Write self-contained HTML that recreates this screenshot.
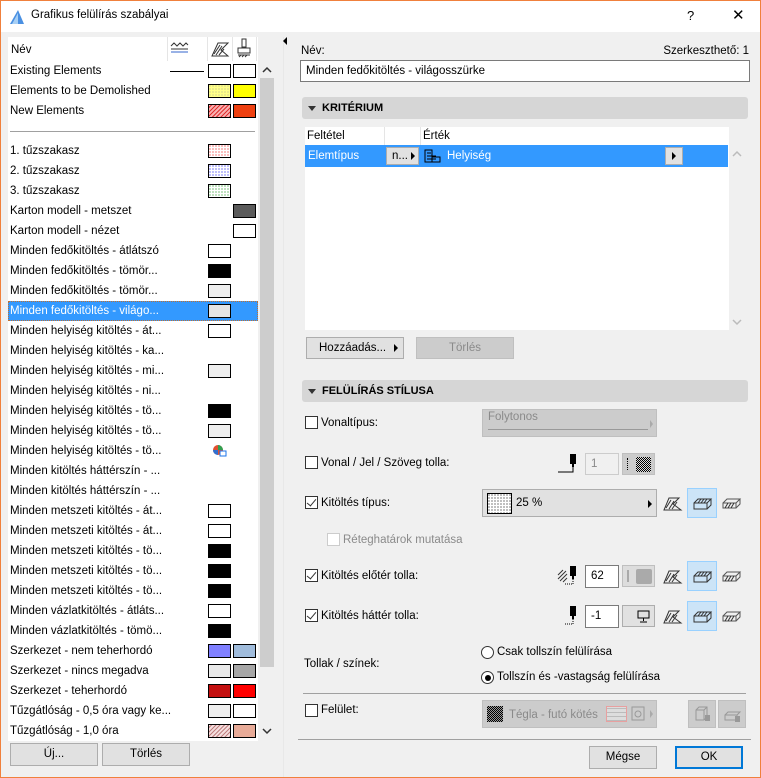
<!DOCTYPE html>
<html><head><meta charset="utf-8"><style>
*{box-sizing:border-box;margin:0;padding:0}
body{width:761px;height:778px;background:#f0f0f0;font-family:"Liberation Sans",sans-serif;font-size:11.5px;color:#000;position:relative;overflow:hidden}
.a{position:absolute}
.win{position:absolute;left:0;top:0;width:761px;height:778px;border:1px solid #f0803c;pointer-events:none}
.row{position:absolute;left:8px;width:250px;height:20px;line-height:21px;padding-left:2px;white-space:nowrap}
.sw{position:absolute;width:23px;height:14px;border:1px solid #000;top:3px}
.s1{left:200px}.s2{left:225px}
.btn{position:absolute;background:#e1e1e1;border:1px solid #adadad;text-align:center}
.hdr{position:absolute;left:302px;width:446px;height:22px;background:#d6d6d6;border-radius:3px;font-weight:bold;line-height:22px;padding-left:20px;font-size:11px}
.hdr:before{content:"";position:absolute;left:6px;top:9px;border-left:4px solid transparent;border-right:4px solid transparent;border-top:5px solid #333}
.cb{position:absolute;width:13px;height:13px;border:1px solid #333;background:#fff}
.cb.on:after{content:"";position:absolute;left:3px;top:0px;width:4px;height:8px;border:solid #333;border-width:0 1.5px 1.5px 0;transform:rotate(40deg)}
.lbl{position:absolute;white-space:nowrap}
.dd{position:absolute;background:#e1e1e1;border:1px solid #adadad}
.inp{position:absolute;background:#fff;border:1px solid #7a7a7a;padding-left:5px;line-height:20px}
.ico{position:absolute;width:30px;height:30px}
.ico.sel{background:#cce4f7;border:1px solid #99d1ff}
.dots{background-image:radial-gradient(circle at 1px 1px,#000 0.6px,transparent 0.7px);background-size:3px 3px}
</style></head><body>
<div class="a" style="left:0;top:0;width:761px;height:32px;background:#fff"></div>
<svg class="a" style="left:9px;top:9px" width="16" height="16"><path d="M1 15 L9 1 L15 15 Z" fill="#4a90e2"/><path d="M3 15 L9 4 L9 15Z" fill="#a8d0f5"/></svg>
<div class="lbl" style="left:31px;top:9px;font-size:11.5px">Grafikus felülírás szabályai</div>
<div class="lbl" style="left:687px;top:8px;font-size:13px">?</div>
<div class="lbl" style="left:732px;top:6px;font-size:15px">✕</div>

<div class="a" style="left:8px;top:37px;width:250px;height:704px;background:#fff"></div>
<div class="lbl" style="left:11px;top:44px">Név</div>
<div class="a" style="left:167px;top:37px;width:1px;height:24px;background:#e5e5e5"></div>
<div class="a" style="left:207px;top:37px;width:1px;height:24px;background:#e5e5e5"></div>
<div class="a" style="left:232px;top:37px;width:1px;height:24px;background:#e5e5e5"></div>
<div class="a" style="left:256px;top:37px;width:1px;height:24px;background:#e5e5e5"></div>
<svg class="a" style="left:170px;top:41px" width="20" height="14"><path d="M1 5 L4 2 L7 5 L10 2 L13 5 L16 2 L18 4" stroke="#333" fill="none"/><path d="M1 8H18" stroke="#333"/><path d="M1 11H18" stroke="#3366cc"/></svg>
<svg class="a" style="left:210px;top:40px" width="20" height="18"><path d="M2 16 L8 3 H18 L11 10 L18 16 Z" fill="none" stroke="#333"/><path d="M4 14L10 5M6 15L12 6M9 15L14 9" stroke="#333"/></svg>
<svg class="a" style="left:236px;top:38px" width="16" height="20"><rect x="6" y="1" width="4" height="8" fill="none" stroke="#333"/><path d="M2 10H14V15H2Z" fill="none" stroke="#333"/><path d="M2 17H14M3 19L5 17M6 19L8 17M9 19L11 17" stroke="#333"/></svg>

<div class="row" style="top:61px">Existing Elements<div class="a" style="left:162px;top:10px;width:34px;height:1px;background:#000"></div><div class="sw s1" style="background:#fff"></div><div class="sw s2" style="background:#fff"></div></div>
<div class="row" style="top:81px">Elements to be Demolished<div class="sw s1" style="background-color:#ffff88;background-image:radial-gradient(circle at 1px 1px,#aa9 0.6px,transparent 0.7px);background-size:3px 3px"></div><div class="sw s2" style="background:#ffff00"></div></div>
<div class="row" style="top:101px">New Elements<div class="sw s1" style="background:repeating-linear-gradient(-45deg,#e03030 0 1px,#f8b0b0 1px 3px)"></div><div class="sw s2" style="background:#ee4010"></div></div>
<div class="a" style="left:10px;top:131px;width:245px;height:1px;background:#a0a0a0"></div>

<div class="row" style="top:141px">1. tűzszakasz<div class="sw s1" style="background:#fff;background-image:radial-gradient(circle at 1px 1px,#e00 0.6px,transparent 0.7px);background-size:3px 3px"></div></div>
<div class="row" style="top:161px">2. tűzszakasz<div class="sw s1" style="background:#fff;background-image:radial-gradient(circle at 1px 1px,#00e 0.6px,transparent 0.7px);background-size:3px 3px"></div></div>
<div class="row" style="top:181px">3. tűzszakasz<div class="sw s1" style="background:#fff;background-image:radial-gradient(circle at 1px 1px,#080 0.6px,transparent 0.7px);background-size:3px 3px"></div></div>
<div class="row" style="top:201px">Karton modell - metszet<div class="sw s2" style="background:#5a5a5a"></div></div>
<div class="row" style="top:221px">Karton modell - nézet<div class="sw s2" style="background:#fff"></div></div>
<div class="row" style="top:241px">Minden fedőkitöltés - átlátszó<div class="sw s1" style="background:#fff"></div></div>
<div class="row" style="top:261px">Minden fedőkitöltés - tömör...<div class="sw s1" style="background:#000"></div></div>
<div class="row" style="top:281px">Minden fedőkitöltés - tömör...<div class="sw s1" style="background:#eee"></div></div>
<div class="row" style="top:301px;background:#3399ff;color:#fff;outline:1px dotted #c07030;outline-offset:-1px">Minden fedőkitöltés - világo...<div class="sw s1" style="background:#e4e4e4"></div></div>
<div class="row" style="top:321px">Minden helyiség kitöltés - át...<div class="sw s1" style="background:#fff"></div></div>
<div class="row" style="top:341px">Minden helyiség kitöltés - ka...</div>
<div class="row" style="top:361px">Minden helyiség kitöltés - mi...<div class="sw s1" style="background:#eee"></div></div>
<div class="row" style="top:381px">Minden helyiség kitöltés - ni...</div>
<div class="row" style="top:401px">Minden helyiség kitöltés - tö...<div class="sw s1" style="background:#000"></div></div>
<div class="row" style="top:421px">Minden helyiség kitöltés - tö...<div class="sw s1" style="background:#eee"></div></div>
<div class="row" style="top:441px">Minden helyiség kitöltés - tö...<svg class="a" style="left:204px;top:3px" width="16" height="14"><circle cx="6" cy="6" r="5" fill="#e05030"/><path d="M6 6V1A5 5 0 0 1 11 6Z" fill="#30a050"/><path d="M6 6H1A5 5 0 0 0 6 11Z" fill="#3070d0"/><rect x="8" y="7" width="6" height="5" fill="#fff" stroke="#1a73e8"/></svg></div>
<div class="row" style="top:461px">Minden kitöltés háttérszín - ...</div>
<div class="row" style="top:481px">Minden kitöltés háttérszín - ...</div>
<div class="row" style="top:501px">Minden metszeti kitöltés - át...<div class="sw s1" style="background:#fff"></div></div>
<div class="row" style="top:521px">Minden metszeti kitöltés - át...<div class="sw s1" style="background:#fff"></div></div>
<div class="row" style="top:541px">Minden metszeti kitöltés - tö...<div class="sw s1" style="background:#000"></div></div>
<div class="row" style="top:561px">Minden metszeti kitöltés - tö...<div class="sw s1" style="background:#000"></div></div>
<div class="row" style="top:581px">Minden metszeti kitöltés - tö...<div class="sw s1" style="background:#000"></div></div>
<div class="row" style="top:601px">Minden vázlatkitöltés - átláts...<div class="sw s1" style="background:#fff"></div></div>
<div class="row" style="top:621px">Minden vázlatkitöltés - tömö...<div class="sw s1" style="background:#000"></div></div>
<div class="row" style="top:641px">Szerkezet - nem teherhordó<div class="sw s1" style="background:#8080ff"></div><div class="sw s2" style="background:#a0bcdc"></div></div>
<div class="row" style="top:661px">Szerkezet - nincs megadva<div class="sw s1" style="background:#e8e8e8"></div><div class="sw s2" style="background:#a6a6a6"></div></div>
<div class="row" style="top:681px">Szerkezet - teherhordó<div class="sw s1" style="background:#c41010"></div><div class="sw s2" style="background:#ff0000"></div></div>
<div class="row" style="top:701px">Tűzgátlóság - 0,5 óra vagy ke...<div class="sw s1" style="background:#eee"></div><div class="sw s2" style="background:#fff"></div></div>
<div class="row" style="top:721px">Tűzgátlóság - 1,0 óra<div class="sw s1" style="background:repeating-linear-gradient(-45deg,#c08080 0 1px,#f4dede 1px 3px)"></div><div class="sw s2" style="background:#e8ab98"></div></div>

<div class="a" style="left:258px;top:61px;width:17px;height:680px;background:#f0f0f0"></div>
<div class="a" style="left:260px;top:78px;width:14px;height:589px;background:#cdcdcd"></div>
<svg class="a" style="left:262px;top:66px" width="10" height="8"><path d="M1 6L5 2L9 6" stroke="#333" stroke-width="1.5" fill="none"/></svg>
<svg class="a" style="left:262px;top:727px" width="10" height="8"><path d="M1 2L5 6L9 2" stroke="#333" stroke-width="1.5" fill="none"/></svg>

<div class="btn" style="left:10px;top:743px;width:88px;height:23px;line-height:21px">Új...</div>
<div class="btn" style="left:102px;top:743px;width:88px;height:23px;line-height:21px">Törlés</div>

<div class="a" style="left:283px;top:37px;width:1px;height:741px;background:#e8e8e8"></div>
<svg class="a" style="left:282px;top:37px" width="6" height="8"><path d="M5 0L1 4L5 8Z" fill="#000"/></svg>

<div class="lbl" style="left:301px;top:45px">Név:</div>
<div class="lbl" style="right:12px;top:45px">Szerkeszthető: 1</div>
<div class="inp" style="left:300px;top:60px;width:450px;height:22px">Minden fedőkitöltés - világosszürke</div>

<div class="hdr" style="top:97px">KRITÉRIUM</div>
<div class="a" style="left:305px;top:127px;width:424px;height:203px;background:#fff"></div>
<div class="lbl" style="left:307px;top:130px">Feltétel</div>
<div class="a" style="left:384px;top:127px;width:1px;height:18px;background:#e5e5e5"></div>
<div class="a" style="left:420px;top:127px;width:1px;height:18px;background:#e5e5e5"></div>
<div class="lbl" style="left:423px;top:130px">Érték</div>
<div class="a" style="left:305px;top:145px;width:423px;height:22px;background:#3399ff"></div>
<div class="lbl" style="left:308px;top:150px;color:#fff">Elemtípus</div>
<div class="btn" style="left:386px;top:147px;width:33px;height:18px;line-height:16px;text-align:left;padding-left:5px">n...<span style="position:absolute;right:3px;top:4px;border-left:4px solid #000;border-top:4px solid transparent;border-bottom:4px solid transparent"></span></div>
<svg class="a" style="left:424px;top:148px" width="18" height="16"><path d="M1 2H8V14H1ZM8 9H16V14H8" fill="none" stroke="#000"/><path d="M3 5H7M3 8H12M3 11H12" stroke="#000"/></svg>
<div class="lbl" style="left:447px;top:150px;color:#fff">Helyiség</div>
<div class="btn" style="left:665px;top:147px;width:18px;height:18px"><span style="position:absolute;left:6px;top:4px;border-left:4px solid #000;border-top:4px solid transparent;border-bottom:4px solid transparent"></span></div>
<svg class="a" style="left:732px;top:150px" width="10" height="8"><path d="M1 6L5 2L9 6" stroke="#bbb" stroke-width="1.5" fill="none"/></svg>
<svg class="a" style="left:732px;top:318px" width="10" height="8"><path d="M1 2L5 6L9 2" stroke="#bbb" stroke-width="1.5" fill="none"/></svg>

<div class="btn" style="left:306px;top:337px;width:98px;height:22px;line-height:20px;text-align:left;padding-left:12px">Hozzáadás...<span style="position:absolute;right:5px;top:6px;border-left:4px solid #000;border-top:4px solid transparent;border-bottom:4px solid transparent"></span></div>
<div class="btn" style="left:416px;top:337px;width:98px;height:22px;line-height:20px;background:#ccc;border-color:#bfbfbf;color:#8a8a8a">Törlés</div>

<div class="hdr" style="top:380px">FELÜLÍRÁS STÍLUSA</div>

<div class="cb" style="left:305px;top:416px"></div>
<div class="lbl" style="left:321px;top:417px">Vonaltípus:</div>
<div class="dd" style="left:482px;top:409px;width:175px;height:28px;background:#ccc;border-color:#bfbfbf;color:#8a8a8a;padding:1px 5px">Folytonos<div class="a" style="left:5px;top:19px;width:160px;height:1px;background:#999"></div><span style="position:absolute;right:3px;top:10px;border-left:3px solid #aaa;border-top:4px solid transparent;border-bottom:4px solid transparent"></span></div>

<div class="cb" style="left:305px;top:456px"></div>
<div class="lbl" style="left:321px;top:457px">Vonal / Jel / Szöveg tolla:</div>
<svg class="a" style="left:557px;top:453px" width="24" height="20"><path d="M1 19H16V13" stroke="#000" fill="none"/><rect x="13" y="1" width="6" height="10" fill="#000"/><rect x="15" y="10" width="2" height="4" fill="#000"/></svg>
<div class="inp" style="left:585px;top:453px;width:34px;height:22px;border-color:#ccc;background:#f0f0f0;color:#888">1</div>
<div class="btn" style="left:622px;top:453px;width:33px;height:22px;background:#ccc;border-color:#bfbfbf"><div class="a" style="left:4px;top:4px;width:1px;height:12px;border-left:1px dotted #000"></div><div class="a" style="left:13px;top:3px;width:15px;height:15px;background:repeating-conic-gradient(#000 0 25%,#ddd 0 50%) 0 0/2px 2px"></div></div>

<div class="cb on" style="left:305px;top:496px"></div>
<div class="lbl" style="left:321px;top:497px">Kitöltés típus:</div>
<div class="dd" style="left:482px;top:489px;width:175px;height:28px"><div class="a dots" style="left:4px;top:3px;width:25px;height:21px;border:1px solid #000;background-color:#fff"></div><div class="lbl" style="left:33px;top:7px">25 %</div><span style="position:absolute;right:4px;top:10px;border-left:4px solid #000;border-top:4px solid transparent;border-bottom:4px solid transparent"></span></div>

<div class="cb" style="left:327px;top:533px;border-color:#ccc"></div>
<div class="lbl" style="left:343px;top:534px;color:#8a8a8a">Réteghatárok mutatása</div>

<div class="cb on" style="left:305px;top:569px"></div>
<div class="lbl" style="left:321px;top:570px">Kitöltés előtér tolla:</div>
<svg class="a" style="left:557px;top:565px" width="24" height="20"><path d="M1 10L6 5M1 14L9 6M3 16L10 9M6 17L10 13" stroke="#333"/><path d="M8 19H16V13" stroke="#000" fill="none" stroke-dasharray="1 1"/><rect x="13" y="1" width="6" height="10" fill="#000"/><rect x="15" y="10" width="2" height="4" fill="#000"/></svg>
<div class="inp" style="left:585px;top:565px;width:34px;height:23px">62</div>
<div class="btn" style="left:622px;top:565px;width:33px;height:22px;background:#ddd;border-color:#bfbfbf"><div class="a" style="left:4px;top:4px;width:2px;height:12px;background:#aaa"></div><div class="a" style="left:13px;top:3px;width:16px;height:15px;background:#aaa;border-radius:2px"></div></div>

<div class="cb on" style="left:305px;top:609px"></div>
<div class="lbl" style="left:321px;top:610px">Kitöltés háttér tolla:</div>
<svg class="a" style="left:557px;top:605px" width="24" height="20"><path d="M8 19H16V13" stroke="#000" fill="none" stroke-dasharray="1 1"/><rect x="13" y="1" width="6" height="10" fill="#000"/><rect x="15" y="10" width="2" height="4" fill="#000"/></svg>
<div class="inp" style="left:585px;top:605px;width:34px;height:23px">-1</div>
<div class="btn" style="left:622px;top:605px;width:33px;height:22px"><svg class="a" style="left:14px;top:4px" width="14" height="13"><rect x="1" y="1" width="11" height="7" fill="none" stroke="#000"/><path d="M6.5 8V11M3 12H10" stroke="#000"/></svg></div>

<svg class="a" style="left:663px;top:496px" width="20" height="16"><path d="M1 14L6 2H16L10 8L18 14Z" fill="none" stroke="#333"/><path d="M3 12L8 4M6 13L11 5M9 13L14 6" stroke="#333"/></svg>
<div class="ico sel" style="left:687px;top:488px"><svg style="position:absolute;left:5px;top:8px" width="20" height="14"><path d="M1 6H14V12H1ZM1 6L5 2H18L14 6M18 2V8L14 12" fill="none" stroke="#333"/><path d="M5 6L8 2M8 6L11 2M11 6L14 2" stroke="#333"/></svg></div>
<svg class="a" style="left:722px;top:496px" width="20" height="14"><path d="M1 7H14V12H1ZM1 7L5 3H18L14 7M18 3V8L14 12" fill="none" stroke="#555"/><path d="M3 12L6 7M6 12L9 7M9 12L12 7" stroke="#333"/></svg>

<svg class="a" style="left:663px;top:569px" width="20" height="16"><path d="M1 14L6 2H16L10 8L18 14Z" fill="none" stroke="#333"/><path d="M3 12L8 4M6 13L11 5M9 13L14 6" stroke="#333"/></svg>
<div class="ico sel" style="left:687px;top:561px"><svg style="position:absolute;left:5px;top:8px" width="20" height="14"><path d="M1 6H14V12H1ZM1 6L5 2H18L14 6M18 2V8L14 12" fill="none" stroke="#333"/><path d="M5 6L8 2M8 6L11 2M11 6L14 2" stroke="#333"/></svg></div>
<svg class="a" style="left:722px;top:569px" width="20" height="14"><path d="M1 7H14V12H1ZM1 7L5 3H18L14 7M18 3V8L14 12" fill="none" stroke="#555"/><path d="M3 12L6 7M6 12L9 7M9 12L12 7" stroke="#333"/></svg>

<svg class="a" style="left:663px;top:609px" width="20" height="16"><path d="M1 14L6 2H16L10 8L18 14Z" fill="none" stroke="#333"/><path d="M3 12L8 4M6 13L11 5M9 13L14 6" stroke="#333"/></svg>
<div class="ico sel" style="left:687px;top:601px"><svg style="position:absolute;left:5px;top:8px" width="20" height="14"><path d="M1 6H14V12H1ZM1 6L5 2H18L14 6M18 2V8L14 12" fill="none" stroke="#333"/><path d="M5 6L8 2M8 6L11 2M11 6L14 2" stroke="#333"/></svg></div>
<svg class="a" style="left:722px;top:609px" width="20" height="14"><path d="M1 7H14V12H1ZM1 7L5 3H18L14 7M18 3V8L14 12" fill="none" stroke="#555"/><path d="M3 12L6 7M6 12L9 7M9 12L12 7" stroke="#333"/></svg>

<div class="lbl" style="left:304px;top:658px">Tollak / színek:</div>
<div class="a" style="left:481px;top:646px;width:13px;height:13px;border:1px solid #333;border-radius:50%;background:#fff"></div>
<div class="lbl" style="left:497px;top:646px">Csak tollszín felülírása</div>
<div class="a" style="left:481px;top:671px;width:13px;height:13px;border:1px solid #333;border-radius:50%;background:#fff"><div class="a" style="left:2.5px;top:2.5px;width:6px;height:6px;border-radius:50%;background:#000"></div></div>
<div class="lbl" style="left:497px;top:671px">Tollszín és -vastagság felülírása</div>

<div class="a" style="left:303px;top:693px;width:443px;height:1px;background:#a0a0a0"></div>
<div class="cb" style="left:305px;top:704px"></div>
<div class="lbl" style="left:321px;top:704px">Felület:</div>
<div class="dd" style="left:482px;top:700px;width:175px;height:28px;background:#ccc;border-color:#bfbfbf;color:#8a8a8a"><div class="a" style="left:4px;top:5px;width:16px;height:16px;background:repeating-conic-gradient(#000 0 25%,#999 0 50%) 0 0/2px 2px"></div><div class="lbl" style="left:26px;top:8px">Tégla - futó kötés</div><div class="a" style="left:123px;top:5px;width:21px;height:16px;border:1px solid #e8a0a0;background:repeating-linear-gradient(0deg,#bbb 0 1px,#ddd 1px 4px)"></div><svg class="a" style="left:148px;top:5px" width="14" height="16"><rect x="1" y="1" width="12" height="13" fill="none" stroke="#999"/><circle cx="7" cy="8" r="3" fill="none" stroke="#999"/></svg><span style="position:absolute;right:3px;top:9px;border-left:3px solid #aaa;border-top:4px solid transparent;border-bottom:4px solid transparent"></span></div>
<div class="btn" style="left:688px;top:700px;width:28px;height:28px;background:#ccc;border-color:#bfbfbf"><svg style="position:absolute;left:5px;top:4px" width="18" height="18"><path d="M2 5L5 2H13V12L10 15H2ZM2 5H10V15M10 5L13 2" fill="none" stroke="#999"/><rect x="11" y="10" width="5" height="6" fill="#999"/></svg></div>
<div class="btn" style="left:718px;top:700px;width:28px;height:28px;background:#ccc;border-color:#bfbfbf"><svg style="position:absolute;left:4px;top:6px" width="20" height="16"><path d="M2 8H14V13H2ZM2 8L5 5H17L14 8" fill="none" stroke="#999"/><rect x="12" y="9" width="5" height="6" fill="#999"/></svg></div>

<div class="a" style="left:298px;top:739px;width:453px;height:1px;background:#a0a0a0"></div>
<div class="btn" style="left:589px;top:746px;width:68px;height:23px;line-height:21px">Mégse</div>
<div class="btn" style="left:675px;top:746px;width:68px;height:23px;line-height:19px;border:2px solid #0078d7">OK</div>

<div class="win"></div>
</body></html>
